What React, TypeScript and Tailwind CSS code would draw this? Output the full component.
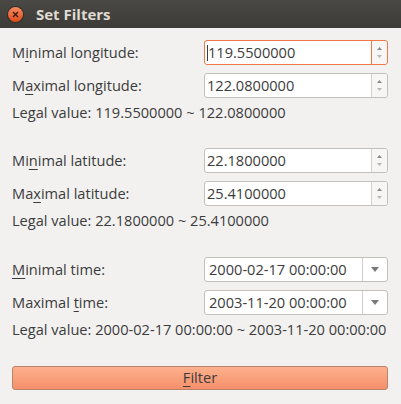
import React from "react"

const font = { fontFamily: '"Open Sans", "Liberation Sans", sans-serif' }

function Label({ pre, u, post }: { pre: string; u: string; post: string }) {
  return (
    <span className="text-[14.6px] text-[#3c3c3c]">
      {pre}
      <span className="underline underline-offset-[3px] decoration-1">{u}</span>
      {post}
    </span>
  )
}

function SpinBox({ value, focused }: { value: string; focused?: boolean }) {
  return (
    <div className={`flex h-[25px] w-[184px] rounded-[3px] border bg-white ${focused ? "border-[#f07746]" : "border-[#c2c0bc]"}`}>
      <div className={`flex flex-1 items-center pl-[2px] text-[14.6px] text-[#3c3c3c] ${focused ? "border-r border-[#f07746]" : "border-r border-[#d4d2cf]"}`}>
        {focused && <span className="h-[16px] w-px bg-[#3c3c3c]" />}
        {value}
      </div>
      <div className="flex w-[15px] flex-col items-center justify-center gap-[5px] rounded-r-[3px] bg-[#f7f6f5]">
        <svg width="5" height="3" viewBox="0 0 5 3"><path d="M0 3 L2.5 0 L5 3Z" fill="#8a8a8a" /></svg>
        <svg width="5" height="3" viewBox="0 0 5 3"><path d="M0 0 L2.5 3 L5 0Z" fill="#b8b8b8" /></svg>
      </div>
    </div>
  )
}

function Combo({ value }: { value: string }) {
  return (
    <div className="flex h-[25px] w-[184px] rounded-[3px] border border-[#c2c0bc] bg-white">
      <div className="flex flex-1 items-center border-r border-[#d4d2cf] pl-[4px] text-[14.6px] text-[#3c3c3c]">{value}</div>
      <div className="flex w-[24px] items-center justify-center">
        <svg width="8" height="5" viewBox="0 0 8 5"><path d="M0 0 L8 0 L4 5Z" fill="#7a7a7a" /></svg>
      </div>
    </div>
  )
}

function Row({ label, children }: { label: React.ReactNode; children: React.ReactNode }) {
  return (
    <div className="flex h-[25px] items-center justify-between">
      {label}
      {children}
    </div>
  )
}

export default function App() {
  return (
    <div className="h-[404px] w-[401px] bg-[#f2f1f0]" style={font}>
      <div className="flex h-[28px] items-center bg-gradient-to-b from-[#4a4945] to-[#3c3b37] pl-[8px]">
        <div className="flex h-[15px] w-[15px] items-center justify-center rounded-full bg-gradient-to-b from-[#f58a5e] to-[#df4a16] shadow-[0_0_0_1px_#2e2d2a]">
          <svg width="7" height="7" viewBox="0 0 7 7"><path d="M1 1 L6 6 M6 1 L1 6" stroke="#3a1a0e" strokeWidth="1.4" /></svg>
        </div>
        <span className="ml-[13px] text-[15px] font-bold text-[#dfdbd2]">Set Filters</span>
      </div>

      <div className="flex flex-col pl-[12px] pr-[13px] pt-[12px]">
        <div className="flex flex-col">
          <Row label={<Label pre="M" u="i" post="nimal longitude:" />}><SpinBox value="119.5500000" focused /></Row>
          <div className="mt-[8px]"><Row label={<Label pre="M" u="a" post="ximal longitude:" />}><SpinBox value="122.0800000" /></Row></div>
          <div className="mt-[6px] flex h-[18px] items-center text-[14.6px] text-[#3c3c3c]">Legal value: 119.5500000 ~ 122.0800000</div>
        </div>

        <div className="mt-[26px] flex flex-col">
          <Row label={<Label pre="Mi" u="n" post="imal latitude:" />}><SpinBox value="22.1800000" /></Row>
          <div className="mt-[8px]"><Row label={<Label pre="Ma" u="x" post="imal latitude:" />}><SpinBox value="25.4100000" /></Row></div>
          <div className="mt-[6px] flex h-[18px] items-center text-[14.6px] text-[#3c3c3c]">Legal value: 22.1800000 ~ 25.4100000</div>
        </div>

        <div className="mt-[27px] flex flex-col">
          <Row label={<Label pre="" u="M" post="inimal time:" />}><Combo value="2000-02-17 00:00:00" /></Row>
          <div className="mt-[8px]"><Row label={<Label pre="Maximal " u="t" post="ime:" />}><Combo value="2003-11-20 00:00:00" /></Row></div>
          <div className="mt-[6px] flex h-[18px] items-center text-[14.6px] text-[#3c3c3c]">Legal value: 2000-02-17 00:00:00 ~ 2003-11-20 00:00:00</div>
        </div>

        <button className="mt-[27px] flex h-[24px] w-full items-center justify-center rounded-[3px] border border-[#b8836a] bg-gradient-to-b from-[#fdb08d] to-[#f5906a] text-[14.6px] text-[#3c3c3c]">
          <span className="underline underline-offset-[3px] decoration-1">F</span>ilter
        </button>
      </div>
    </div>
  )
}
